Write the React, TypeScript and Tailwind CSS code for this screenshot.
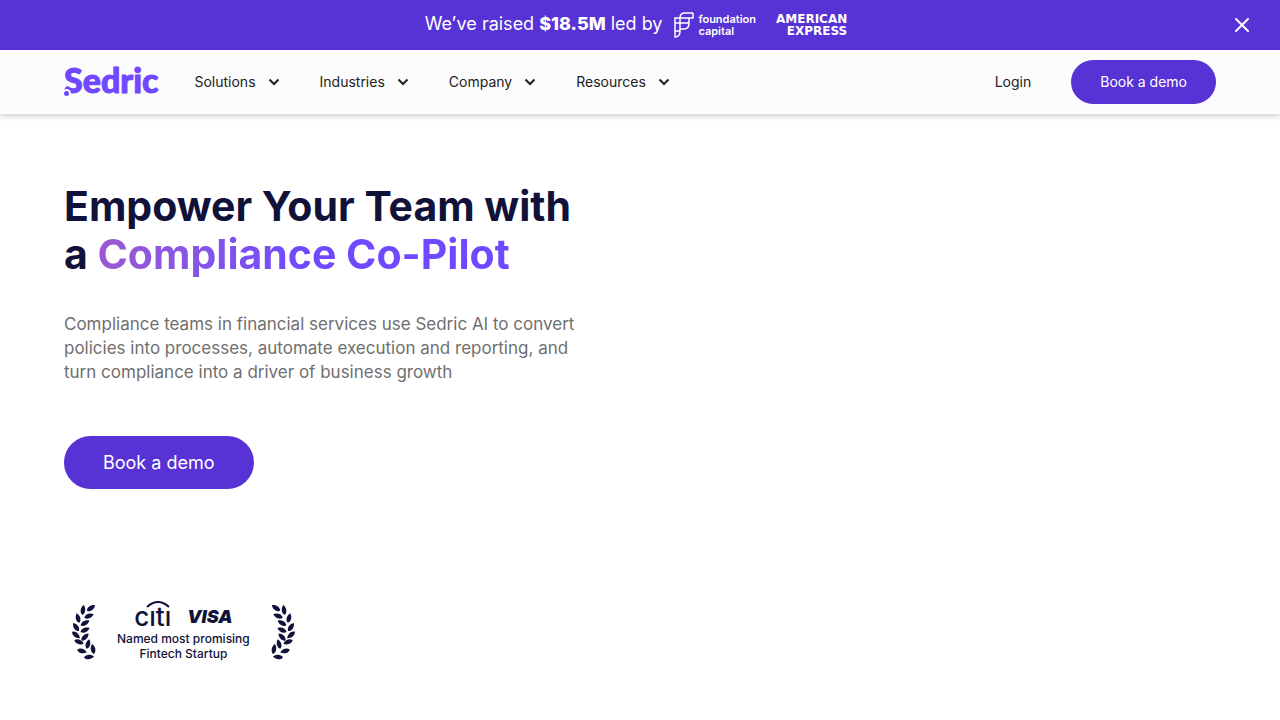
import { useState } from 'react';

type Leaf = [x: number, y: number, angle: number];

const navItems = ['Solutions', 'Industries', 'Company', 'Resources'];

// centre and rotation of each leaf in a 24x56 box
const leaves: Leaf[] = [
  [19, 4, -35],
  [11, 6, -82],
  [17, 12, -20],
  [6, 14, -105],
  [13, 19, -30],
  [4, 23, -125],
  [13, 26, -25],
  [4, 31, 40],
  [13, 33, -45],
  [7, 38, 20],
  [16, 40, -75],
  [10, 47, 15],
  [21, 45, -100],
  [17, 53, -5],
];

function Laurel({ className = '' }: { className?: string }) {
  return (
    <svg viewBox="0 0 24 56" className={`h-14 w-6 ${className}`} fill="#10123a" aria-hidden="true">
      {leaves.map(([x, y, angle]) => (
        <path
          key={`${x}-${y}`}
          d="M-5 0C-3-3 2-3 5 0C2 3-3 3-5 0Z"
          transform={`translate(${x} ${y}) rotate(${angle})`}
        />
      ))}
    </svg>
  );
}

function Chevron() {
  return (
    <svg viewBox="0 0 12 8" className="h-2 w-3" fill="none" stroke="#222" strokeWidth="2" aria-hidden="true">
      <path d="M1.500 1.500L6 6l4.500-4.500" />
    </svg>
  );
}

function Banner({ onClose }: { onClose: () => void }) {
  return (
    <div className="relative flex h-[50px] items-center justify-center bg-[#5732d5] pr-2 text-white">
      <p className="pb-0.5 text-lg">
        We’ve raised <strong className="font-extrabold">$18.5M</strong> led by
      </p>
      <div className="ml-3 flex items-center gap-1">
        <svg viewBox="0 0 20 26" className="h-[26px] w-5" fill="none" stroke="white" strokeWidth="1.500" aria-hidden="true">
          <path d="M19 1v5H1v5h14V6M19 1h-8Q6 1 6 6v13M1 11v8h5q0 6-5 6v-6M6 17h4q5 0 5-6" />
        </svg>
        <div className="text-[11px] leading-3 font-semibold">
          <div>foundation</div>
          <div>capital</div>
        </div>
      </div>
      <div className="ml-5 text-right font-['DejaVu_Sans',sans-serif] text-xs leading-3 font-bold">
        <div>AMERICAN</div>
        <div>EXPRESS</div>
      </div>
      <button type="button" aria-label="Close" onClick={onClose} className="absolute top-[18px] right-[31px]">
        <svg viewBox="0 0 14 14" className="size-3.5" stroke="white" strokeWidth="2" strokeLinecap="round">
          <path d="M1 1l12 12M13 1L1 13" />
        </svg>
      </button>
    </div>
  );
}

function Navbar() {
  return (
    <header className="flex h-16 items-center bg-[#fcfcfc] px-16 text-sm text-[#222] shadow-[0_2px_6px_rgba(0,0,0,0.2)]">
      <a
        href="#"
        className="relative pb-1 font-['Lato',sans-serif] text-[34px] leading-8 font-black text-[#7049ff] [-webkit-text-stroke:1px_#7049ff]"
      >
        Sedric
        <span className="absolute bottom-1 left-0 size-[5px] rounded-full bg-[#7049ff] ring-2 ring-[#fcfcfc]" />
      </a>
      <nav className="ml-9 flex gap-10">
        {navItems.map((item) => (
          <button key={item} type="button" className="flex items-center gap-3">
            {item}
            <Chevron />
          </button>
        ))}
      </nav>
      <a href="#" className="ml-auto">
        Login
      </a>
      <a href="#" className="ml-10 rounded-full bg-[#5732d5] px-[29px] py-3 text-white">
        Book a demo
      </a>
    </header>
  );
}

function Award() {
  return (
    <div className="mt-[114px] flex items-center px-2 text-[#10123a]">
      <Laurel />
      <div className="mx-[21px] text-center">
        <div className="flex items-center justify-center gap-4">
          {/* the wordmark's arc takes the place of the dots */}
          <span aria-label="citi" className="relative text-[26px] leading-7 font-medium">
            cıtı
            <svg viewBox="0 0 24 7" className="absolute -top-0.5 left-3 h-[7px] w-6" fill="none" stroke="currentColor" strokeWidth="2">
              <path d="M1 6Q12-4 23 6" />
            </svg>
          </span>
          <span className="text-lg leading-7 font-black italic">VISA</span>
        </div>
        <p className="text-xs leading-[15px] font-medium">
          Named most promising
          <br />
          Fintech Startup
        </p>
      </div>
      <Laurel className="-scale-x-100" />
    </div>
  );
}

function App() {
  const [showBanner, setShowBanner] = useState(true);

  return (
    <div className="min-h-screen bg-white font-['Inter',sans-serif]">
      {showBanner && <Banner onClose={() => setShowBanner(false)} />}
      <Navbar />
      <main className="px-16 pt-17">
        <h1 className="text-[41px] leading-12 font-bold text-[#10123a]">
          Empower Your Team with
          <br />a{' '}
          <span className="bg-linear-to-r from-[#9b59d0] to-[#7049ff] to-50% bg-clip-text text-transparent">
            Compliance Co-Pilot
          </span>
        </h1>
        <p className="mt-[34px] max-w-[528px] text-[17px] leading-6 text-[#6f6f6f]">
          Compliance teams in financial services use Sedric AI to convert policies into processes,
          automate execution and reporting, and turn compliance into a driver of business growth
        </p>
        <a href="#" className="mt-13 inline-block rounded-full bg-[#5732d5] px-[39px] py-3 text-lg leading-[29px] text-white">
          Book a demo
        </a>
        <Award />
      </main>
    </div>
  );
}

export default App;
